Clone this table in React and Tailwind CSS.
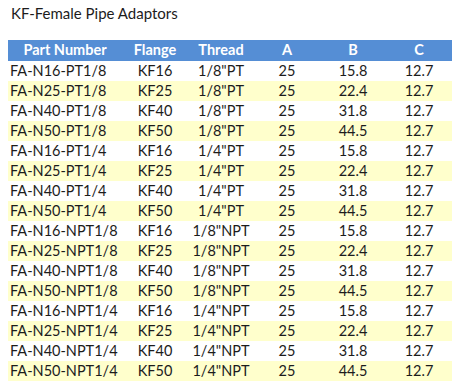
import React from "react";

const rows = [
  ["FA-N16-PT1/8", "KF16", '1/8"PT', "25", "15.8", "12.7"],
  ["FA-N25-PT1/8", "KF25", '1/8"PT', "25", "22.4", "12.7"],
  ["FA-N40-PT1/8", "KF40", '1/8"PT', "25", "31.8", "12.7"],
  ["FA-N50-PT1/8", "KF50", '1/8"PT', "25", "44.5", "12.7"],
  ["FA-N16-PT1/4", "KF16", '1/4"PT', "25", "15.8", "12.7"],
  ["FA-N25-PT1/4", "KF25", '1/4"PT', "25", "22.4", "12.7"],
  ["FA-N40-PT1/4", "KF40", '1/4"PT', "25", "31.8", "12.7"],
  ["FA-N50-PT1/4", "KF50", '1/4"PT', "25", "44.5", "12.7"],
  ["FA-N16-NPT1/8", "KF16", '1/8"NPT', "25", "15.8", "12.7"],
  ["FA-N25-NPT1/8", "KF25", '1/8"NPT', "25", "22.4", "12.7"],
  ["FA-N40-NPT1/8", "KF40", '1/8"NPT', "25", "31.8", "12.7"],
  ["FA-N50-NPT1/8", "KF50", '1/8"NPT', "25", "44.5", "12.7"],
  ["FA-N16-NPT1/4", "KF16", '1/4"NPT', "25", "15.8", "12.7"],
  ["FA-N25-NPT1/4", "KF25", '1/4"NPT', "25", "22.4", "12.7"],
  ["FA-N40-NPT1/4", "KF40", '1/4"NPT', "25", "31.8", "12.7"],
  ["FA-N50-NPT1/4", "KF50", '1/4"NPT', "25", "44.5", "12.7"],
];

const headers = ["Part Number", "Flange", "Thread", "A", "B", "C"];

export default function App() {
  return (
    <div className="w-[461px] h-[388px] bg-white text-[#1c1c1c] font-['Lato','Liberation_Sans',sans-serif] text-[14.5px] leading-none">
      <div className="h-[40px] pl-[11px] pt-[6px] text-[15px]">KF-Female Pipe Adaptors</div>
      <div className="ml-[8px] w-[444px]">
        <div className="grid grid-cols-[114px_66px_66px_66px_66px_66px] h-[21px] items-center bg-[#558ED5] text-white font-bold">
          {headers.map((h) => (
            <div key={h} className="text-center">{h}</div>
          ))}
        </div>
        {rows.map((r, i) => (
          <div
            key={r[0]}
            className={`grid grid-cols-[114px_66px_66px_66px_66px_66px] h-[20px] items-center ${i % 2 === 1 ? "bg-[#FFFFCC]" : "bg-white"}`}
          >
            <div className="pl-[2px]">{r[0]}</div>
            {r.slice(1).map((c, j) => (
              <div key={j} className="text-center">{c}</div>
            ))}
          </div>
        ))}
      </div>
    </div>
  );
}
